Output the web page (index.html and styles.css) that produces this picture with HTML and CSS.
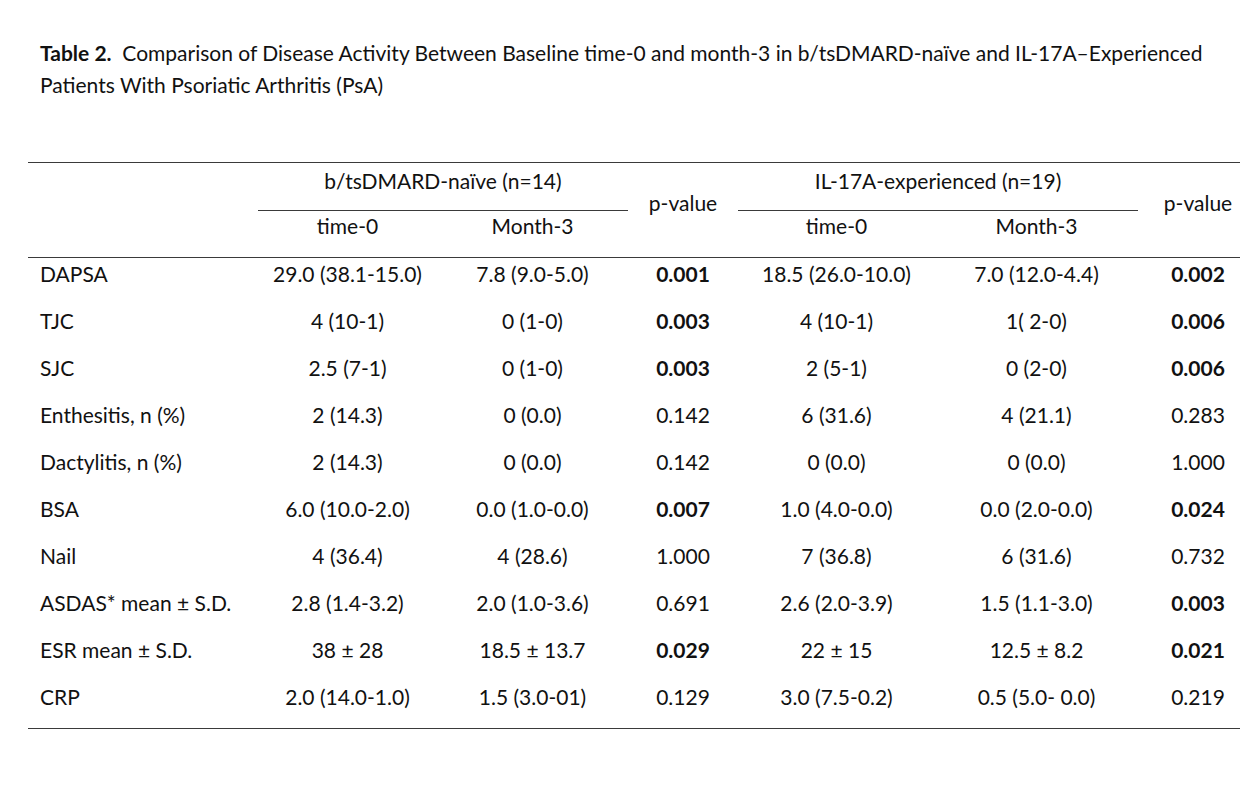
FILE: index.html
```html
<!DOCTYPE html>
<html lang="en">
<head>
<meta charset="utf-8">
<title>Table 2</title>
<link rel="stylesheet" href="styles.css">
</head>
<body>
<div class="page">
  <div class="caption">
    <div class="cap-line"><b class="label">Table 2.</b><span class="title">&nbsp; Comparison of Disease Activity Between Baseline time-0 and month-3 in b/tsDMARD-naïve and IL-17A–Experienced</span></div>
    <div class="cap-line">Patients With Psoriatic Arthritis (PsA)</div>
  </div>
  <table class="data">
    <colgroup>
      <col class="c-label"><col class="c-a1"><col class="c-a2"><col class="c-p1"><col class="c-b1"><col class="c-b2"><col class="c-p2">
    </colgroup>
    <thead>
      <tr class="h1">
        <th class="blank" rowspan="2"></th>
        <th class="group" colspan="2">b/tsDMARD-naïve (n=14)</th>
        <th class="pv" rowspan="2">p-value</th>
        <th class="group" colspan="2">IL-17A-experienced (n=19)</th>
        <th class="pv" rowspan="2">p-value</th>
      </tr>
      <tr class="h2">
        <th>time-0</th><th>Month-3</th>
        <th>time-0</th><th>Month-3</th>
      </tr>
    </thead>
    <tbody>
      <tr><td>DAPSA</td><td>29.0 (38.1-15.0)</td><td>7.8 (9.0-5.0)</td><td class="b">0.001</td><td>18.5 (26.0-10.0)</td><td>7.0 (12.0-4.4)</td><td class="b">0.002</td></tr>
      <tr><td>TJC</td><td>4 (10-1)</td><td>0 (1-0)</td><td class="b">0.003</td><td>4 (10-1)</td><td>1( 2-0)</td><td class="b">0.006</td></tr>
      <tr><td>SJC</td><td>2.5 (7-1)</td><td>0 (1-0)</td><td class="b">0.003</td><td>2 (5-1)</td><td>0 (2-0)</td><td class="b">0.006</td></tr>
      <tr><td>Enthesitis, n (%)</td><td>2 (14.3)</td><td>0 (0.0)</td><td>0.142</td><td>6 (31.6)</td><td>4 (21.1)</td><td>0.283</td></tr>
      <tr><td>Dactylitis, n (%)</td><td>2 (14.3)</td><td>0 (0.0)</td><td>0.142</td><td>0 (0.0)</td><td>0 (0.0)</td><td>1.000</td></tr>
      <tr><td>BSA</td><td>6.0 (10.0-2.0)</td><td>0.0 (1.0-0.0)</td><td class="b">0.007</td><td>1.0 (4.0-0.0)</td><td>0.0 (2.0-0.0)</td><td class="b">0.024</td></tr>
      <tr><td>Nail</td><td>4 (36.4)</td><td>4 (28.6)</td><td>1.000</td><td>7 (36.8)</td><td>6 (31.6)</td><td>0.732</td></tr>
      <tr><td>ASDAS* mean ± S.D.</td><td>2.8 (1.4-3.2)</td><td>2.0 (1.0-3.6)</td><td>0.691</td><td>2.6 (2.0-3.9)</td><td>1.5 (1.1-3.0)</td><td class="b">0.003</td></tr>
      <tr><td>ESR mean ± S.D.</td><td>38 ± 28</td><td>18.5 ± 13.7</td><td class="b">0.029</td><td>22 ± 15</td><td>12.5 ± 8.2</td><td class="b">0.021</td></tr>
      <tr><td>CRP</td><td>2.0 (14.0-1.0)</td><td>1.5 (3.0-01)</td><td>0.129</td><td>3.0 (7.5-0.2)</td><td>0.5 (5.0- 0.0)</td><td>0.219</td></tr>
    </tbody>
  </table>
</div>
</body>
</html>
```

FILE: styles.css
```css
html, body {
  margin: 0;
  padding: 0;
  background: #fff;
  overflow: hidden;
}

body {
  width: 1240px;
  height: 790px;
  font-family: Lato, "Open Sans", "Liberation Sans", sans-serif;
  font-size: 21px;
  color: #111;
}

.page {
  padding-top: 37px;
}

.caption {
  margin: 0 0 0 40px;
  width: 1190px;
  line-height: 32px;
}

.cap-line {
  white-space: nowrap;
}

.caption .label {
  font-weight: 700;
}

.data {
  margin: 61px 0 0 28px;
  width: 1230px;
  border-collapse: collapse;
  table-layout: fixed;
  line-height: 24px;
}

.c-label { width: 230px; }
.c-a1 { width: 179px; }
.c-a2 { width: 191px; }
.c-p1 { width: 110px; }
.c-b1 { width: 197px; }
.c-b2 { width: 203px; }
.c-p2 { width: 120px; }

.data th {
  font-weight: 400;
  text-align: center;
  padding: 0;
}

.h1 th {
  border-top: 1px solid #3a3a3a;
  padding: 6px 0 17px;
  height: 24px;
}

.h1 th.group {
  border-bottom: 1px solid #3a3a3a;
}

.h1 th.pv {
  vertical-align: top;
  padding: 28px 0 0;
}

.h2 th {
  padding: 3px 0 19px;
  height: 24px;
}

.data thead tr:last-child th,
.data th.pv,
.data th.blank {
  border-bottom: 1px solid #3a3a3a;
}

.data td {
  text-align: center;
  padding: 4px 0 19px;
  height: 24px;
  vertical-align: top;
  white-space: nowrap;
}

.data td:first-child {
  text-align: left;
  padding-left: 12px;
}

.data td.b {
  font-weight: 700;
}

.data tbody tr:last-child td {
  border-bottom: 1px solid #3a3a3a;
}
```
